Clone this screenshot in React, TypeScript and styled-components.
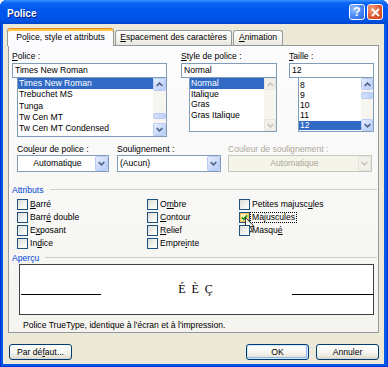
import React from "react";
import styled, { createGlobalStyle } from "styled-components";

const GlobalStyle = createGlobalStyle`
  html, body { margin: 0; padding: 0; background: #ffffff; }
  body {
    font-family: "Liberation Sans", Arial, sans-serif;
    font-size: 8.6px;
    color: #000;
  }
  *, *::before, *::after { box-sizing: border-box; }
`;

const Window = styled.div`
  width: 388px;
  height: 367px;
  display: flex;
  flex-direction: column;
  background: #0058e6;
  border-radius: 7px 7px 0 0;
  overflow: hidden;
  box-shadow: inset 1px 0 #0831d9, inset -1px 0 #0831d9, inset 0 -1px #0831d9;
`;

const TitleBar = styled.div`
  height: 24px;
  flex: none;
  display: flex;
  align-items: center;
  padding: 0 5px 0 7px;
  background: linear-gradient(
    to bottom,
    #3d95ff 0%,
    #0a66f5 12%,
    #0058ee 40%,
    #0055ea 70%,
    #0050e0 90%,
    #0043c8 100%
  );
`;

const Title = styled.div`
  flex: 1;
  padding-top: 3px;
  font-weight: bold;
  font-size: 10px;
  line-height: 12px;
  color: #fff;
  text-shadow: 1px 1px 0 #0a1e8c;
`;

const CaptionButton = styled.div<{ $kind: "help" | "close" }>`
  width: 16px;
  height: 16px;
  margin-left: 2px;
  border: 1px solid #fff;
  border-radius: 3px;
  display: flex;
  align-items: center;
  justify-content: center;
  background: ${(p) =>
    p.$kind === "close"
      ? "radial-gradient(circle at 30% 30%, #f4a588, #e0582e 55%, #c4401a)"
      : "radial-gradient(circle at 30% 30%, #9cc0ff, #4584f6 55%, #2a62df)"};
  color: #fff;
  font-weight: bold;
  font-size: 12px;
  line-height: 12px;
`;

const Body = styled.div`
  flex: 1;
  margin: 0 4px 3px 3px;
  padding: 4px 5px 4px 5px;
  background: #ece9d8;
  display: flex;
  flex-direction: column;
`;

const TabStrip = styled.div`
  height: 18px;
  flex: none;
  display: flex;
  align-items: flex-start;
  margin: 0 0 -1px -1px;
  position: relative;
  z-index: 1;
`;

const Tab = styled.div<{ $active?: boolean; $w: number; $ml?: number }>`
  width: ${(p) => p.$w}px;
  margin-left: ${(p) => p.$ml ?? 0}px;
  text-align: center;
  white-space: nowrap;
  line-height: 13px;
  border: 1px solid #919b9c;
  border-bottom: none;
  border-radius: 3px 3px 0 0;
  ${(p) =>
    p.$active
      ? `
    height: 18px;
    padding-top: 2px;
    border-top: 1px solid #e68b2c;
    box-shadow: inset 0 2px 0 #ffc73c;
    background: #fcfcfe;
  `
      : `
    height: 15px;
    margin-top: 2px;
    padding-top: 0px;
    background: linear-gradient(to bottom, #ffffff 0%, #f4f3ee 60%, #e8e6dc 100%);
  `}
`;

const Panel = styled.div`
  height: 288px;
  flex: none;
  border: 1px solid #919b9c;
  background: linear-gradient(to bottom, #fcfcfe 0%, #f5f4ef 100%);
  padding: 4px 0 0 3px;
  display: flex;
  flex-direction: column;
`;

const TopRow = styled.div`
  display: flex;
  align-items: flex-start;
`;

const FieldCol = styled.div<{ $w: number; $ml?: number }>`
  width: ${(p) => p.$w}px;
  margin-left: ${(p) => p.$ml ?? 0}px;
  display: flex;
  flex-direction: column;
`;

const FieldLabel = styled.div`
  height: 13px;
  line-height: 13px;
  white-space: nowrap;
`;

const TextBox = styled.div`
  height: 15px;
  border: 1px solid #7f9db9;
  background: #fff;
  padding: 0 2px;
  line-height: 13px;
  white-space: nowrap;
  overflow: hidden;
`;

const ListBox = styled.div<{ $h: number; $indent: number }>`
  height: ${(p) => p.$h}px;
  margin-left: ${(p) => p.$indent}px;
  border: 1px solid #7f9db9;
  border-top: none;
  background: #fff;
  display: flex;
`;

const ListItems = styled.div<{ $pt: number }>`
  flex: 1;
  min-width: 0;
  padding-top: ${(p) => p.$pt}px;
  overflow: hidden;
`;

const ListItem = styled.div<{ $h: number; $sel?: boolean }>`
  height: ${(p) => p.$h}px;
  line-height: ${(p) => p.$h}px;
  padding-left: 1px;
  white-space: nowrap;
  background: ${(p) => (p.$sel ? "#316ac5" : "transparent")};
  color: ${(p) => (p.$sel ? "#fff" : "#000")};
`;

const ScrollBar = styled.div<{ $w: number }>`
  width: ${(p) => p.$w}px;
  flex: none;
  display: flex;
  flex-direction: column;
  background: #f6f5f0;
`;

const ScrollBtn = styled.div<{ $h: number; $disabled?: boolean }>`
  height: ${(p) => p.$h}px;
  flex: none;
  display: flex;
  align-items: center;
  justify-content: center;
  border: 1px solid ${(p) => (p.$disabled ? "#e6e5dc" : "#b8cbf3")};
  border-radius: 2px;
  background: ${(p) =>
    p.$disabled
      ? "#f1f0ea"
      : "linear-gradient(135deg, #e8effe 0%, #c8d8fc 60%, #b9cdf8 100%)"};
`;

const Track = styled.div<{ $pad: number }>`
  flex: 1;
  padding-top: ${(p) => p.$pad}px;
  display: flex;
  flex-direction: column;
`;

const Thumb = styled.div<{ $h: number }>`
  height: ${(p) => p.$h}px;
  border: 1px solid #b8cbf3;
  border-radius: 2px;
  background: linear-gradient(90deg, #d2e0fd, #bcd0fa);
`;

const ComboRow = styled.div`
  display: flex;
  margin-top: 6px;
  padding-left: 5px;
`;

const ComboCol = styled.div<{ $w: number; $ml?: number }>`
  width: ${(p) => p.$w}px;
  margin-left: ${(p) => p.$ml ?? 0}px;
  display: flex;
  flex-direction: column;
`;

const ComboLabel = styled.div<{ $disabled?: boolean }>`
  height: 12px;
  line-height: 12px;
  white-space: nowrap;
  color: ${(p) => (p.$disabled ? "#aca899" : "#000")};
`;

const ComboBox = styled.div<{ $disabled?: boolean }>`
  height: 17px;
  border: 1px solid ${(p) => (p.$disabled ? "#c9c7ba" : "#7f9db9")};
  background: ${(p) => (p.$disabled ? "#f5f4ea" : "#fff")};
  display: flex;
`;

const ComboText = styled.div<{ $center?: boolean; $disabled?: boolean }>`
  flex: 1;
  line-height: 15px;
  padding-left: 2px;
  white-space: nowrap;
  text-align: ${(p) => (p.$center ? "center" : "left")};
  color: ${(p) => (p.$disabled ? "#aca899" : "#000")};
`;

const DropBtn = styled.div<{ $disabled?: boolean }>`
  width: 13px;
  height: 15px;
  flex: none;
  display: flex;
  align-items: center;
  justify-content: center;
  border: 1px solid ${(p) => (p.$disabled ? "#e6e5dc" : "#b8cbf3")};
  border-radius: 2px;
  background: ${(p) =>
    p.$disabled
      ? "#f1f0ea"
      : "linear-gradient(135deg, #e8effe 0%, #c8d8fc 60%, #b9cdf8 100%)"};
`;

const GroupHeader = styled.div<{ $mt: number }>`
  display: flex;
  align-items: center;
  height: 13px;
  margin-top: ${(p) => p.$mt}px;
  padding-right: 1px;
  color: #0046d5;
  white-space: nowrap;
  &::after {
    content: "";
    flex: 1;
    border-top: 1px solid #d0d0bf;
    margin-left: 6px;
  }
`;

const CheckGrid = styled.div`
  display: grid;
  grid-template-columns: 130px 92px 1fr;
  grid-template-rows: repeat(4, 13px);
  grid-auto-flow: column;
  margin-top: 2px;
  padding-left: 5px;
`;

const CheckItem = styled.div`
  position: relative;
  display: flex;
  align-items: center;
  gap: 2px;
  white-space: nowrap;
`;

const Box = styled.div<{ $hot?: boolean }>`
  width: 11px;
  height: 11px;
  flex: none;
  border: 1px solid #1c5180;
  display: flex;
  align-items: center;
  justify-content: center;
  background: ${(p) =>
    p.$hot
      ? "linear-gradient(135deg, #fff3d2 0%, #fad77e 100%)"
      : "linear-gradient(135deg, #dcdcd7 0%, #f3f3f0 60%, #ffffff 100%)"};
  box-shadow: ${(p) => (p.$hot ? "inset 0 0 0 1px #f8c45a" : "none")};
`;

const CheckLabel = styled.span<{ $focus?: boolean }>`
  line-height: ${(p) => (p.$focus ? "9px" : "13px")};
  ${(p) =>
    p.$focus
      ? `
    border: 1px dotted #000;
    padding: 0 1px;
    margin-left: -2px;
  `
      : ""}
`;

const Cursor = styled.svg`
  position: absolute;
  left: 6px;
  top: 6px;
  overflow: visible;
`;

const Preview = styled.div`
  height: 51px;
  margin-left: 7px;
  width: 355px;
  border: 1px solid #404040;
  background: #fff;
  display: grid;
  grid-template-columns: 80px 1fr 81px;
  align-items: end;
  padding: 0 0 19px 1px;
`;

const PreviewLine = styled.div`
  height: 1px;
  background: #000;
`;

const Sample = styled.div`
  font-family: "Liberation Serif", "Times New Roman", serif;
  font-size: 12px;
  line-height: 12px;
  letter-spacing: 6px;
  text-align: center;
  padding-left: 4px;
`;

const Note = styled.div`
  margin-top: 4px;
  padding-left: 11px;
  line-height: 13px;
  white-space: nowrap;
`;

const ButtonRow = styled.div`
  display: flex;
  margin-top: 11px;
  padding-left: 1px;
`;

const Button = styled.div<{ $ml?: number; $default?: boolean }>`
  width: 63px;
  height: 16px;
  margin-left: ${(p) => p.$ml ?? 0}px;
  border: 1px solid #003c74;
  border-radius: 3px;
  display: flex;
  align-items: center;
  justify-content: center;
  white-space: nowrap;
  background: linear-gradient(to bottom, #ffffff 0%, #f4f4f0 55%, #e6e3d8 85%, #d6d0c5 100%);
  box-shadow: ${(p) =>
    p.$default ? "inset 0 0 0 1px #cee7ff, inset -1px -1px 0 1px #98b8ea" : "none"};
`;

const U = styled.span`
  text-decoration: underline;
  text-underline-offset: 1px;
`;

const Chevron = ({ up, color = "#4d6185" }: { up?: boolean; color?: string }) => (
  <svg width="7" height="5" viewBox="0 0 7 5">
    <polyline
      points={up ? "0.6,4 3.5,1.1 6.4,4" : "0.6,1 3.5,3.9 6.4,1"}
      fill="none"
      stroke={color}
      strokeWidth="1.6"
    />
  </svg>
);

type ListProps = {
  items: string[];
  selected: number;
  h: number;
  indent: number;
  itemH: number;
  pt: number;
  sbW: number;
  btnH: number;
  thumb?: { top: number; h: number };
  disabled?: boolean;
};

const FontList = ({ items, selected, h, indent, itemH, pt, sbW, btnH, thumb, disabled }: ListProps) => (
  <ListBox $h={h} $indent={indent}>
    <ListItems $pt={pt}>
      {items.map((it, i) => (
        <ListItem key={it} $h={itemH} $sel={i === selected}>
          {it}
        </ListItem>
      ))}
    </ListItems>
    <ScrollBar $w={sbW}>
      <ScrollBtn $h={btnH} $disabled={disabled}>
        <Chevron up color={disabled ? "#c9c7ba" : "#4d6185"} />
      </ScrollBtn>
      <Track $pad={thumb ? thumb.top : 0}>{thumb && <Thumb $h={thumb.h} />}</Track>
      <ScrollBtn $h={btnH} $disabled={disabled}>
        <Chevron color={disabled ? "#c9c7ba" : "#4d6185"} />
      </ScrollBtn>
    </ScrollBar>
  </ListBox>
);

const Check = ({
  label,
  checked,
  hot,
  focus,
  cursor,
}: {
  label: React.ReactNode;
  checked?: boolean;
  hot?: boolean;
  focus?: boolean;
  cursor?: boolean;
}) => (
  <CheckItem>
    <Box $hot={hot}>
      {checked && (
        <svg width="7" height="7" viewBox="0 0 7 7">
          <polyline points="0.8,3.4 2.6,5.3 6.2,1.4" fill="none" stroke="#21a121" strokeWidth="1.7" />
        </svg>
      )}
    </Box>
    <CheckLabel $focus={focus}>{label}</CheckLabel>
    {cursor && (
      <Cursor width="10" height="16" viewBox="0 0 12 19">
        <path
          d="M0.5 0.5 L0.5 15.5 L4 12 L6.6 18 L8.8 17 L6.3 11.2 L11 11.2 Z"
          fill="#fff"
          stroke="#000"
          strokeWidth="1"
          strokeLinejoin="round"
        />
      </Cursor>
    )}
  </CheckItem>
);

export default function App() {
  return (
    <>
      <GlobalStyle />
      <Window>
        <TitleBar>
          <Title>Police</Title>
          <CaptionButton $kind="help">?</CaptionButton>
          <CaptionButton $kind="close">
            <svg width="9" height="9" viewBox="0 0 9 9">
              <path d="M1 1 L8 8 M8 1 L1 8" stroke="#fff" strokeWidth="1.8" />
            </svg>
          </CaptionButton>
        </TitleBar>
        <Body>
          <TabStrip>
            <Tab $active $w={107}>
              Po<U>l</U>ice, style et attributs
            </Tab>
            <Tab $w={117} $ml={1}>
              <U>E</U>spacement des caractères
            </Tab>
            <Tab $w={50} $ml={1}>
              <U>A</U>nimation
            </Tab>
          </TabStrip>
          <Panel>
            <TopRow>
              <FieldCol $w={155}>
                <FieldLabel>
                  <U>P</U>olice :
                </FieldLabel>
                <TextBox>Times New Roman</TextBox>
                <FontList
                  items={["Times New Roman", "Trebuchet MS", "Tunga", "Tw Cen MT", "Tw Cen MT Condensed"]}
                  selected={0}
                  h={59}
                  indent={5}
                  itemH={11.3}
                  pt={0}
                  sbW={13}
                  btnH={13}
                  thumb={{ top: 22, h: 6 }}
                />
              </FieldCol>
              <FieldCol $w={96} $ml={14}>
                <FieldLabel>
                  <U>S</U>tyle de police :
                </FieldLabel>
                <TextBox>Normal</TextBox>
                <FontList
                  items={["Normal", "Italique", "Gras", "Gras Italique"]}
                  selected={0}
                  h={54}
                  indent={8}
                  itemH={10.5}
                  pt={0}
                  sbW={12}
                  btnH={12}
                  disabled
                />
              </FieldCol>
              <FieldCol $w={85} $ml={12}>
                <FieldLabel>
                  <U>T</U>aille :
                </FieldLabel>
                <TextBox>12</TextBox>
                <FontList
                  items={["8", "9", "10", "11", "12"]}
                  selected={4}
                  h={54}
                  indent={9}
                  itemH={9.9}
                  pt={3}
                  sbW={12}
                  btnH={12}
                  thumb={{ top: 2, h: 7 }}
                />
              </FieldCol>
            </TopRow>

            <ComboRow>
              <ComboCol $w={92}>
                <ComboLabel>
                  Cou<U>l</U>eur de police :
                </ComboLabel>
                <ComboBox>
                  <ComboText $center>Automatique</ComboText>
                  <DropBtn>
                    <Chevron />
                  </DropBtn>
                </ComboBox>
              </ComboCol>
              <ComboCol $w={104} $ml={8}>
                <ComboLabel>
                  Souli<U>g</U>nement :
                </ComboLabel>
                <ComboBox>
                  <ComboText>(Aucun)</ComboText>
                  <DropBtn>
                    <Chevron />
                  </DropBtn>
                </ComboBox>
              </ComboCol>
              <ComboCol $w={144} $ml={7}>
                <ComboLabel $disabled>Couleur de soulignement :</ComboLabel>
                <ComboBox $disabled>
                  <ComboText $center $disabled>
                    Automatique
                  </ComboText>
                  <DropBtn $disabled>
                    <Chevron color="#c9c7ba" />
                  </DropBtn>
                </ComboBox>
              </ComboCol>
            </ComboRow>

            <GroupHeader $mt={11}>Attributs</GroupHeader>
            <CheckGrid>
              <Check label={<><U>B</U>arré</>} />
              <Check label={<>Barr<U>é</U> double</>} />
              <Check label={<>E<U>x</U>posant</>} />
              <Check label={<>In<U>d</U>ice</>} />
              <Check label={<>O<U>m</U>bre</>} />
              <Check label={<><U>C</U>ontour</>} />
              <Check label={<><U>R</U>elief</>} />
              <Check label={<>Empre<U>i</U>nte</>} />
              <Check label={<>Petites majusc<U>u</U>les</>} />
              <Check label={<>Ma<U>j</U>uscules</>} checked hot focus cursor />
              <Check label={<>Masqu<U>é</U></>} />
            </CheckGrid>

            <GroupHeader $mt={1}>Aperçu</GroupHeader>
            <Preview>
              <PreviewLine />
              <Sample>ÉÈÇ</Sample>
              <PreviewLine />
            </Preview>
            <Note>Police TrueType, identique à l'écran et à l'impression.</Note>
          </Panel>
          <ButtonRow>
            <Button>
              Par dé<U>f</U>aut...
            </Button>
            <Button $ml={174} $default>
              OK
            </Button>
            <Button $ml={7}>Annuler</Button>
          </ButtonRow>
        </Body>
      </Window>
    </>
  );
}
